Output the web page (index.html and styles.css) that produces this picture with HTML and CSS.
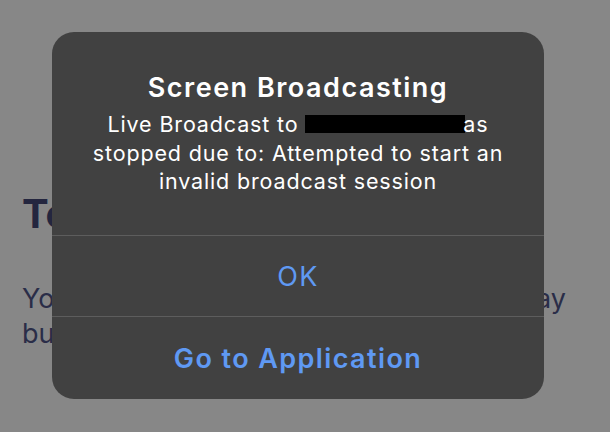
FILE: index.html
```html
<!DOCTYPE html>
<html>
    <head>
        <title>Screen Broadcasting</title>
        <link rel="stylesheet" href="styles.css">
    </head>
    <body>
        <div class="page">
            <h1 class="page-title">Test your broadcast</h1>
            <div class="page-text">
                <div class="page-line-full">You can share your screen. It may</div>
                <div>build along with you.</div>
            </div>
        </div>

        <div class="alert">
            <div class="alert-body">
                <div class="alert-title">Screen Broadcasting</div>
                <div class="alert-message">
                    Live Broadcast to <span class="redact"></span>as<br>
                    stopped due to: Attempted to start an<br>
                    invalid broadcast session
                </div>
            </div>
            <button class="alert-btn">OK</button>
            <button class="alert-btn alert-btn-bold">Go to Application</button>
        </div>
    </body>
</html>
```

FILE: styles.css
```css
html {
    height: 100%;
}
body {
    margin: 0px;
    height: 100%;
    background-color: #878787;
    font-family: "Inter", "Liberation Sans", sans-serif;
    overflow: hidden;
    position: relative;
}
.page {
    width: 544px;
    padding: 190px 0px 0px 22px;
    color: #24263f;
}
.page-title {
    margin: 0px;
    font-size: 40px;
    font-weight: 700;
    line-height: 48px;
    white-space: nowrap;
}
.page-text {
    margin: 43px 0px 0px 0px;
    font-size: 27px;
    line-height: 35px;
    color: #2a2d48;
}
.page-line-full {
    text-align: justify;
    text-align-last: justify;
}
.alert {
    position: absolute;
    left: 52px;
    top: 32px;
    width: 492px;
    height: 367px;
    background-color: #414141;
    border-radius: 22px;
    overflow: hidden;
    display: flex;
    flex-flow: column nowrap;
}
.alert-body {
    height: 204px;
    box-sizing: border-box;
    padding: 38px 10px 0px 10px;
    text-align: center;
    color: #ffffff;
    border-bottom: 1px solid #5d5d5d;
}
.alert-title {
    font-size: 27px;
    font-weight: 600;
    line-height: 36px;
    letter-spacing: 1.5px;
}
.alert-message {
    margin-top: 4px;
    font-size: 21.5px;
    line-height: 28.5px;
    letter-spacing: 0.85px;
    white-space: nowrap;
}
.redact {
    display: inline-block;
    width: 160px;
    height: 18px;
    background-color: #000000;
    vertical-align: -1px;
    margin-right: -2px;
}
.alert-btn {
    outline: none;
    border: 0px;
    background: none;
    height: 80px;
    padding: 0px;
    font-family: inherit;
    font-size: 27px;
    letter-spacing: 1.4px;
    color: #5f99f3;
    cursor: pointer;
}
.alert-btn-bold {
    font-weight: 600;
    padding-top: 4px;
}
.alert-btn + .alert-btn {
    border-top: 1px solid #5d5d5d;
}
```
